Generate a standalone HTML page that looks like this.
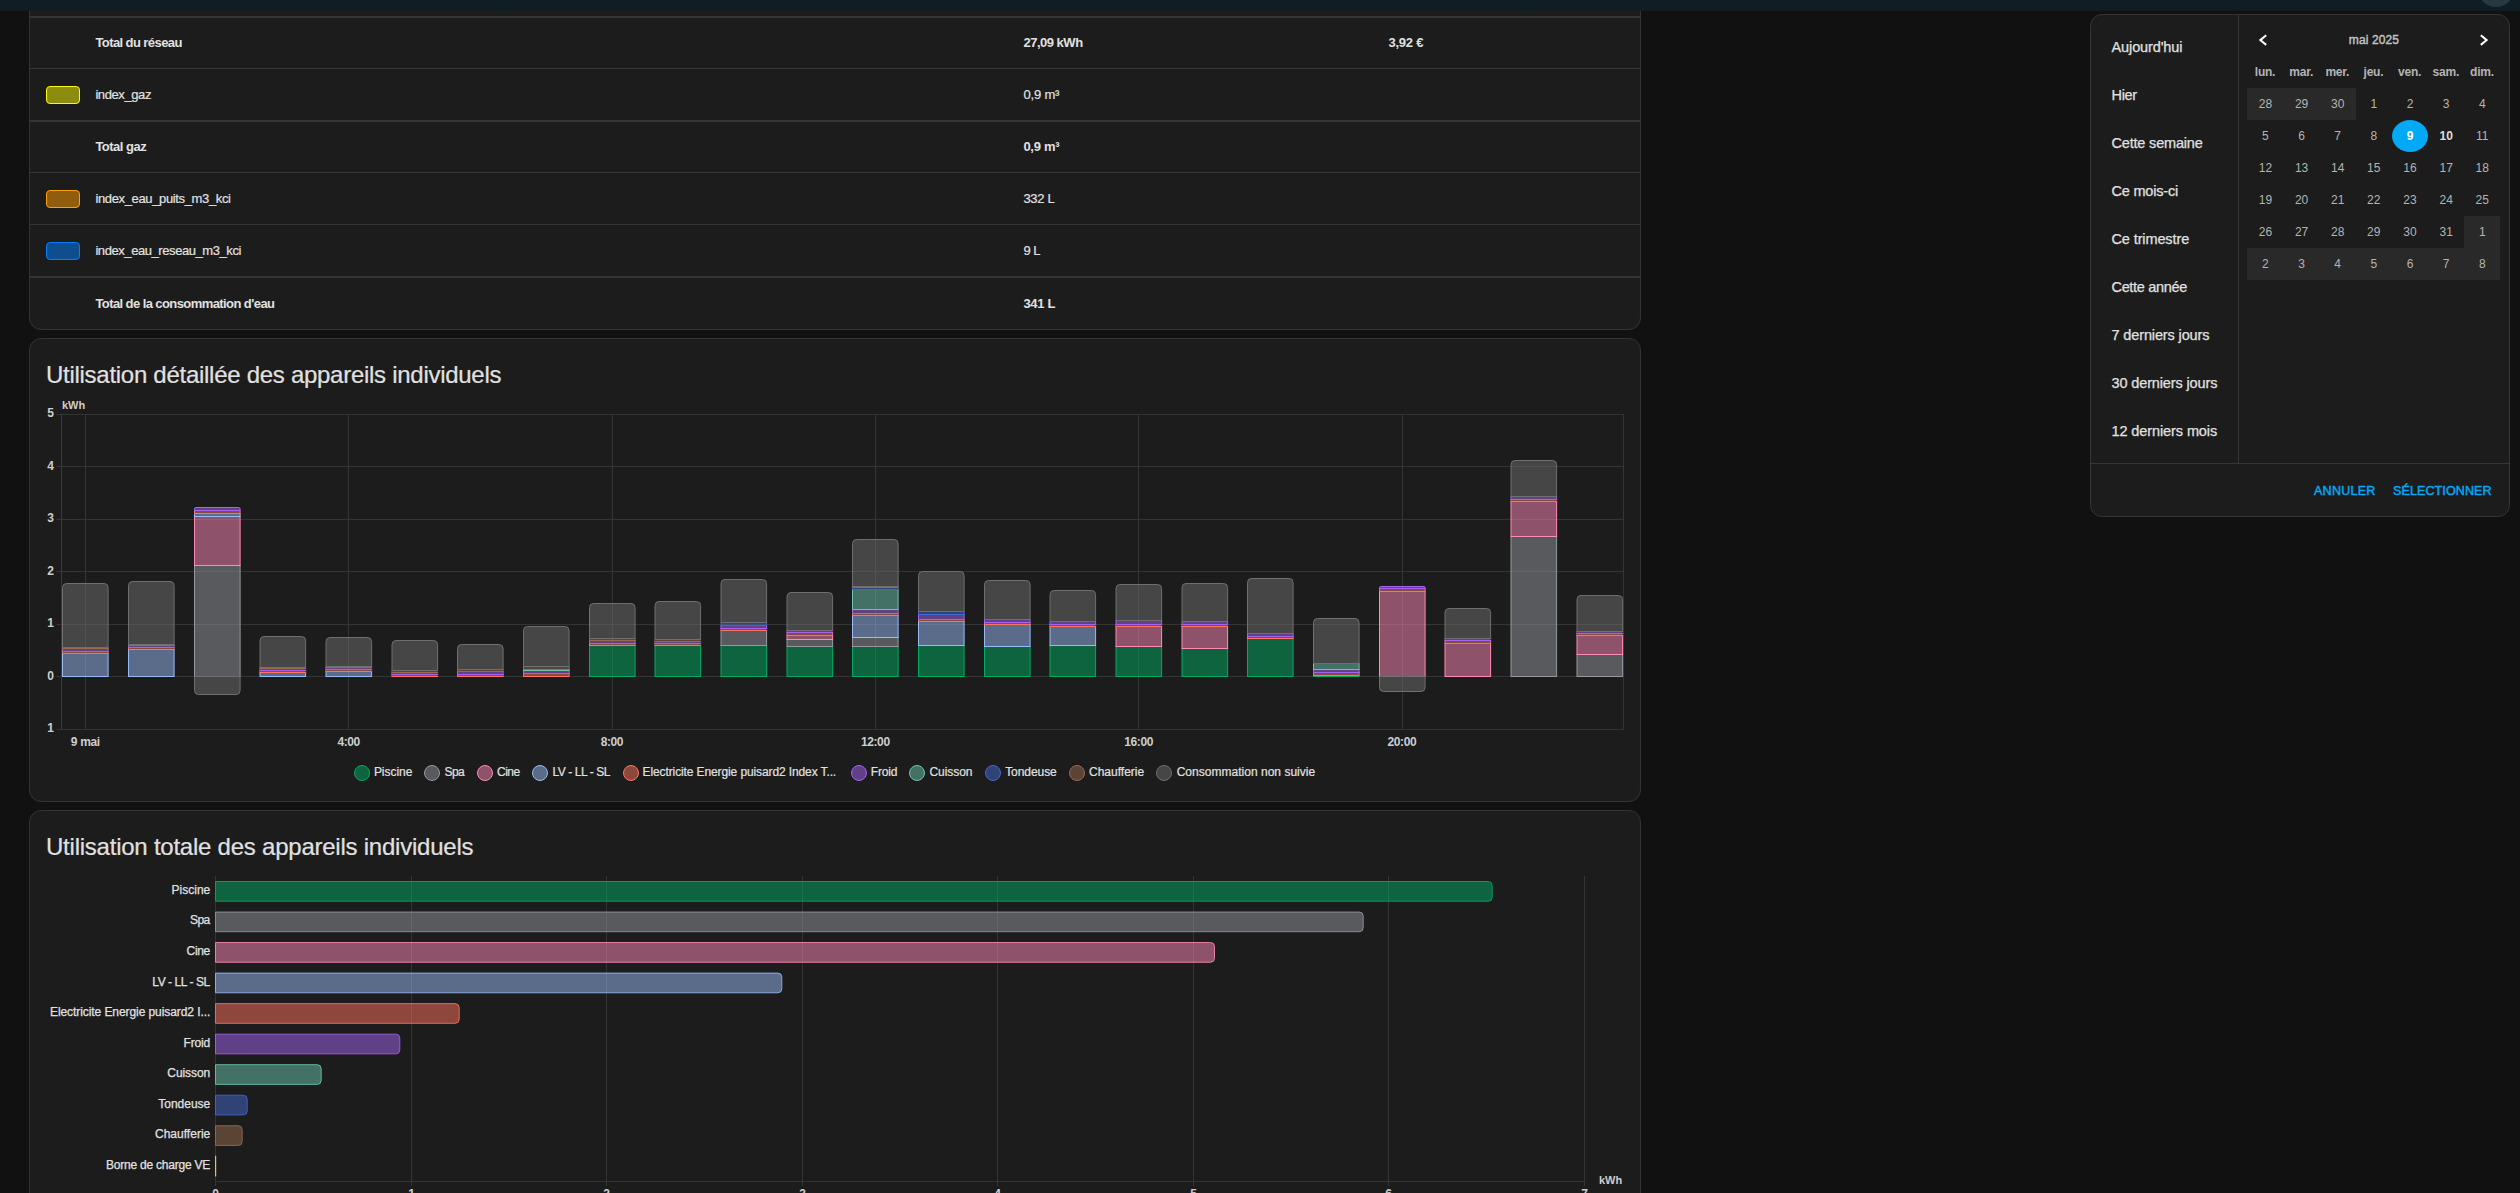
<!DOCTYPE html>
<html lang="fr"><head><meta charset="utf-8"><title>Énergie</title>
<style>
html,body{margin:0;padding:0;background:#111111;}
html{width:2520px;height:1193px;overflow:hidden;}
body{width:2520px;height:1193px;overflow:hidden;position:relative;font-family:"Liberation Sans", sans-serif;color:#e1e1e1;}
.abs{position:absolute;}
.card{position:absolute;left:29px;width:1610px;background:#1c1c1c;border:1px solid #333333;border-radius:12px;}
.t{position:absolute;white-space:pre;line-height:1;}
.title{font-size:24px;color:#e1e1e1;-webkit-text-stroke:0.2px #e1e1e1;}
.row{font-size:13px;color:#e1e1e1;-webkit-text-stroke:0.2px #e1e1e1;}
.row.b{-webkit-text-stroke:0;}
.b{font-weight:700;}
.hl{position:absolute;left:30px;width:1610px;background:#353535;}
.sw{position:absolute;left:46px;width:32px;height:16px;border-radius:4px;border:1px solid;}
.lg{position:absolute;top:765px;width:14px;height:14px;border-radius:50%;border:1px solid;}
.lt{position:absolute;top:764.7px;font-size:12px;line-height:14px;white-space:pre;color:#e1e1e1;-webkit-text-stroke:0.2px #e1e1e1;}
.rng{position:absolute;left:2111.5px;font-size:14.5px;line-height:16px;white-space:pre;color:#e1e1e1;-webkit-text-stroke:0.25px #e1e1e1;}
.cal{position:absolute;width:36px;height:32px;line-height:32px;text-align:center;font-size:12px;color:#b4b4b4;}
.wd{position:absolute;width:40px;text-align:center;font-size:12px;line-height:14px;font-weight:700;color:#b4b4b4;top:65px;letter-spacing:-0.25px;}
.out{position:absolute;background:#292929;}
.btn{font-size:12.5px;color:#03a9f4;-webkit-text-stroke:0.45px #03a9f4;}
svg text{font-family:"Liberation Sans", sans-serif;}
#root{position:absolute;left:0;top:0;width:2520px;height:1193px;overflow:hidden;background:#111111;}
</style></head><body><div id="root">

<div class="abs" style="left:0;top:0;width:2520px;height:11px;background:linear-gradient(#101e24 0,#101e24 10px,rgba(17,32,40,.72) 10px);overflow:hidden;z-index:5"><div class="abs" style="left:2478px;top:-29px;width:36px;height:36px;border-radius:50%;background:#2a3940"></div></div>
<div class="card" style="top:-30px;height:358px;"></div>
<div class="hl" style="top:16px;height:2px"></div>
<div class="hl" style="top:68px;height:1px"></div>
<div class="hl" style="top:120px;height:2px"></div>
<div class="hl" style="top:172px;height:1px"></div>
<div class="hl" style="top:224px;height:1px"></div>
<div class="hl" style="top:276px;height:2px"></div>
<div class="t row b" style="left:95.4px;top:36px;letter-spacing:-0.58px">Total du réseau</div>
<div class="t row b" style="left:1023.4px;top:36px;letter-spacing:-0.486px">27,09 kWh</div>
<div class="t row b" style="left:1388.4px;top:36px;letter-spacing:-0.229px">3,92 €</div>
<div class="sw" style="top:86px;border-color:#fcfc00;background:rgba(252,252,0,0.5)"></div>
<div class="t row" style="left:95.4px;top:88px;letter-spacing:-0.409px">index_gaz</div>
<div class="t row" style="left:1023.4px;top:88px;letter-spacing:-0.169px">0,9 m³</div>
<div class="t row b" style="left:95.4px;top:140px;letter-spacing:-0.509px">Total gaz</div>
<div class="t row b" style="left:1023.4px;top:140px;letter-spacing:-0.254px">0,9 m³</div>
<div class="sw" style="top:190px;border-color:#ffa000;background:rgba(255,160,0,0.5)"></div>
<div class="t row" style="left:95.4px;top:192px;letter-spacing:-0.357px">index_eau_puits_m3_kci</div>
<div class="t row" style="left:1023.4px;top:192px;letter-spacing:-0.308px">332 L</div>
<div class="sw" style="top:242px;border-color:#0080ff;background:rgba(0,128,255,0.5)"></div>
<div class="t row" style="left:95.4px;top:244px;letter-spacing:-0.427px">index_eau_reseau_m3_kci</div>
<div class="t row" style="left:1023.4px;top:244px;letter-spacing:-0.536px">9 L</div>
<div class="t row b" style="left:95.4px;top:297px;letter-spacing:-0.581px">Total de la consommation d'eau</div>
<div class="t row b" style="left:1023.4px;top:297px;letter-spacing:-0.311px">341 L</div>
<div class="card" style="top:338px;height:462px;"></div>
<div class="t title" style="left:46px;top:363px;letter-spacing:-0.278px">Utilisation détaillée des appareils individuels</div>
<div class="card" style="top:810px;height:420px;"></div>
<div class="t title" style="left:46px;top:835px;letter-spacing:-0.235px">Utilisation totale des appareils individuels</div>
<svg class="abs" style="left:0;top:0" width="2520" height="1193" viewBox="0 0 2520 1193">
<line x1="56.5" x2="1623.5" y1="414.5" y2="414.5" stroke="#343434" stroke-width="1"/>
<text x="54" y="417.2" font-size="12" font-weight="700" fill="#cecece" text-anchor="end">5</text>
<line x1="56.5" x2="1623.5" y1="466.5" y2="466.5" stroke="#343434" stroke-width="1"/>
<text x="54" y="469.7" font-size="12" font-weight="700" fill="#cecece" text-anchor="end">4</text>
<line x1="56.5" x2="1623.5" y1="519.5" y2="519.5" stroke="#343434" stroke-width="1"/>
<text x="54" y="522.2" font-size="12" font-weight="700" fill="#cecece" text-anchor="end">3</text>
<line x1="56.5" x2="1623.5" y1="571.5" y2="571.5" stroke="#343434" stroke-width="1"/>
<text x="54" y="574.7" font-size="12" font-weight="700" fill="#cecece" text-anchor="end">2</text>
<line x1="56.5" x2="1623.5" y1="624.5" y2="624.5" stroke="#343434" stroke-width="1"/>
<text x="54" y="627.2" font-size="12" font-weight="700" fill="#cecece" text-anchor="end">1</text>
<line x1="56.5" x2="1623.5" y1="676.5" y2="676.5" stroke="#343434" stroke-width="1"/>
<text x="54" y="679.7" font-size="12" font-weight="700" fill="#cecece" text-anchor="end">0</text>
<line x1="56.5" x2="1623.5" y1="729.5" y2="729.5" stroke="#343434" stroke-width="1"/>
<text x="54" y="732.2" font-size="12" font-weight="700" fill="#cecece" text-anchor="end">1</text>
<line x1="85.5" x2="85.5" y1="414.0" y2="729.5" stroke="#343434" stroke-width="1"/>
<line x1="348.5" x2="348.5" y1="414.0" y2="729.5" stroke="#343434" stroke-width="1"/>
<line x1="612.5" x2="612.5" y1="414.0" y2="729.5" stroke="#343434" stroke-width="1"/>
<line x1="875.5" x2="875.5" y1="414.0" y2="729.5" stroke="#343434" stroke-width="1"/>
<line x1="1138.5" x2="1138.5" y1="414.0" y2="729.5" stroke="#343434" stroke-width="1"/>
<line x1="1402.5" x2="1402.5" y1="414.0" y2="729.5" stroke="#343434" stroke-width="1"/>
<line x1="61.5" x2="61.5" y1="414.0" y2="729.5" stroke="#3a3a3a" stroke-width="1"/>
<line x1="1623.5" x2="1623.5" y1="414.0" y2="729.5" stroke="#343434" stroke-width="1"/>
<text x="62" y="409" font-size="11" font-weight="700" fill="#cecece">kWh</text>
<text x="85.3" y="746" font-size="12" font-weight="700" fill="#cecece" text-anchor="middle" letter-spacing="-0.346">9 mai</text>
<text x="348.6" y="746" font-size="12" font-weight="700" fill="#cecece" text-anchor="middle" letter-spacing="-0.44">4:00</text>
<text x="611.9" y="746" font-size="12" font-weight="700" fill="#cecece" text-anchor="middle" letter-spacing="-0.44">8:00</text>
<text x="875.3" y="746" font-size="12" font-weight="700" fill="#cecece" text-anchor="middle" letter-spacing="-0.373">12:00</text>
<text x="1138.6" y="746" font-size="12" font-weight="700" fill="#cecece" text-anchor="middle" letter-spacing="-0.373">16:00</text>
<text x="1401.9" y="746" font-size="12" font-weight="700" fill="#cecece" text-anchor="middle" letter-spacing="-0.373">20:00</text>
<rect x="62.5" y="653.5" width="45.60" height="23.0" fill="rgba(151,187,245,0.5)" stroke="#97bbf5" stroke-width="1"/>
<rect x="62.5" y="651.5" width="45.60" height="2.0" fill="rgba(255,114,92,0.5)" stroke="#ff725c" stroke-width="1"/>
<rect x="62.5" y="648.5" width="45.60" height="3.0" fill="rgba(164,99,242,0.5)" stroke="#a463f2" stroke-width="1"/>
<rect x="62.5" y="647.5" width="45.60" height="1.0" fill="rgba(156,107,78,0.5)" stroke="#9c6b4e" stroke-width="1"/>
<path d="M62.5,647.5 L62.5,587.5 Q62.5,583.5 66.5,583.5 L104.1,583.5 Q108.1,583.5 108.1,587.5 L108.1,647.5 Z" fill="rgba(111,111,111,0.5)" stroke="#6f6f6f" stroke-width="1"/>
<rect x="128.5" y="649.5" width="45.60" height="27.0" fill="rgba(151,187,245,0.5)" stroke="#97bbf5" stroke-width="1"/>
<rect x="128.5" y="647.5" width="45.60" height="2.0" fill="rgba(255,114,92,0.5)" stroke="#ff725c" stroke-width="1"/>
<rect x="128.5" y="645.5" width="45.60" height="2.0" fill="rgba(164,99,242,0.5)" stroke="#a463f2" stroke-width="1"/>
<rect x="128.5" y="644.5" width="45.60" height="1.0" fill="rgba(156,107,78,0.5)" stroke="#9c6b4e" stroke-width="1"/>
<path d="M128.5,644.5 L128.5,585.5 Q128.5,581.5 132.5,581.5 L170.1,581.5 Q174.1,581.5 174.1,585.5 L174.1,644.5 Z" fill="rgba(111,111,111,0.5)" stroke="#6f6f6f" stroke-width="1"/>
<rect x="194.5" y="565.5" width="45.60" height="111.0" fill="rgba(148,152,160,0.5)" stroke="#9498a0" stroke-width="1"/>
<rect x="194.5" y="516.5" width="45.60" height="49.0" fill="rgba(255,138,183,0.5)" stroke="#ff8ab7" stroke-width="1"/>
<rect x="194.5" y="513.5" width="45.60" height="3.0" fill="rgba(151,187,245,0.5)" stroke="#97bbf5" stroke-width="1"/>
<rect x="194.5" y="510.5" width="45.60" height="3.0" fill="rgba(255,114,92,0.5)" stroke="#ff725c" stroke-width="1"/>
<path d="M194.5,510.5 L194.5,509.0 Q194.5,507.5 196.0,507.5 L238.6,507.5 Q240.1,507.5 240.1,509.0 L240.1,510.5 Z" fill="rgba(164,99,242,0.5)" stroke="#a463f2" stroke-width="1"/>
<path d="M194.5,676.5 L240.1,676.5 L240.1,690.5 Q240.1,694.5 236.1,694.5 L198.5,694.5 Q194.5,694.5 194.5,690.5 Z" fill="rgba(111,111,111,0.5)" stroke="#6f6f6f" stroke-width="1"/>
<rect x="260.0" y="672.5" width="45.60" height="4.0" fill="rgba(151,187,245,0.5)" stroke="#97bbf5" stroke-width="1"/>
<rect x="260.0" y="670.5" width="45.60" height="2.0" fill="rgba(255,114,92,0.5)" stroke="#ff725c" stroke-width="1"/>
<rect x="260.0" y="668.5" width="45.60" height="2.0" fill="rgba(164,99,242,0.5)" stroke="#a463f2" stroke-width="1"/>
<rect x="260.0" y="667.5" width="45.60" height="1.0" fill="rgba(156,107,78,0.5)" stroke="#9c6b4e" stroke-width="1"/>
<path d="M260.0,667.5 L260.0,640.5 Q260.0,636.5 264.0,636.5 L301.6,636.5 Q305.6,636.5 305.6,640.5 L305.6,667.5 Z" fill="rgba(111,111,111,0.5)" stroke="#6f6f6f" stroke-width="1"/>
<rect x="326.0" y="671.5" width="45.60" height="5.0" fill="rgba(151,187,245,0.5)" stroke="#97bbf5" stroke-width="1"/>
<rect x="326.0" y="669.5" width="45.60" height="2.0" fill="rgba(255,114,92,0.5)" stroke="#ff725c" stroke-width="1"/>
<rect x="326.0" y="667.5" width="45.60" height="2.0" fill="rgba(164,99,242,0.5)" stroke="#a463f2" stroke-width="1"/>
<rect x="326.0" y="666.5" width="45.60" height="1.0" fill="rgba(156,107,78,0.5)" stroke="#9c6b4e" stroke-width="1"/>
<path d="M326.0,666.5 L326.0,641.5 Q326.0,637.5 330.0,637.5 L367.6,637.5 Q371.6,637.5 371.6,641.5 L371.6,666.5 Z" fill="rgba(111,111,111,0.5)" stroke="#6f6f6f" stroke-width="1"/>
<rect x="392.0" y="674.5" width="45.60" height="2.0" fill="rgba(255,114,92,0.5)" stroke="#ff725c" stroke-width="1"/>
<rect x="392.0" y="672.5" width="45.60" height="2.0" fill="rgba(164,99,242,0.5)" stroke="#a463f2" stroke-width="1"/>
<rect x="392.0" y="670.5" width="45.60" height="2.0" fill="rgba(156,107,78,0.5)" stroke="#9c6b4e" stroke-width="1"/>
<path d="M392.0,670.5 L392.0,644.5 Q392.0,640.5 396.0,640.5 L433.6,640.5 Q437.6,640.5 437.6,644.5 L437.6,670.5 Z" fill="rgba(111,111,111,0.5)" stroke="#6f6f6f" stroke-width="1"/>
<rect x="457.5" y="674.5" width="45.60" height="2.0" fill="rgba(255,114,92,0.5)" stroke="#ff725c" stroke-width="1"/>
<rect x="457.5" y="671.5" width="45.60" height="3.0" fill="rgba(164,99,242,0.5)" stroke="#a463f2" stroke-width="1"/>
<rect x="457.5" y="669.5" width="45.60" height="2.0" fill="rgba(156,107,78,0.5)" stroke="#9c6b4e" stroke-width="1"/>
<path d="M457.5,669.5 L457.5,648.5 Q457.5,644.5 461.5,644.5 L499.1,644.5 Q503.1,644.5 503.1,648.5 L503.1,669.5 Z" fill="rgba(111,111,111,0.5)" stroke="#6f6f6f" stroke-width="1"/>
<rect x="523.5" y="673.5" width="45.60" height="3.0" fill="rgba(255,114,92,0.5)" stroke="#ff725c" stroke-width="1"/>
<rect x="523.5" y="670.5" width="45.60" height="3.0" fill="rgba(164,99,242,0.5)" stroke="#a463f2" stroke-width="1"/>
<rect x="523.5" y="669.5" width="45.60" height="1.0" fill="rgba(108,197,176,0.5)" stroke="#6cc5b0" stroke-width="1"/>
<rect x="523.5" y="666.5" width="45.60" height="3.0" fill="rgba(156,107,78,0.5)" stroke="#9c6b4e" stroke-width="1"/>
<path d="M523.5,666.5 L523.5,630.5 Q523.5,626.5 527.5,626.5 L565.1,626.5 Q569.1,626.5 569.1,630.5 L569.1,666.5 Z" fill="rgba(111,111,111,0.5)" stroke="#6f6f6f" stroke-width="1"/>
<rect x="589.5" y="645.5" width="45.60" height="31.0" fill="rgba(1,171,99,0.5)" stroke="#01ab63" stroke-width="1"/>
<rect x="589.5" y="643.5" width="45.60" height="2.0" fill="rgba(255,114,92,0.5)" stroke="#ff725c" stroke-width="1"/>
<rect x="589.5" y="640.5" width="45.60" height="3.0" fill="rgba(164,99,242,0.5)" stroke="#a463f2" stroke-width="1"/>
<rect x="589.5" y="638.5" width="45.60" height="2.0" fill="rgba(156,107,78,0.5)" stroke="#9c6b4e" stroke-width="1"/>
<path d="M589.5,638.5 L589.5,607.5 Q589.5,603.5 593.5,603.5 L631.1,603.5 Q635.1,603.5 635.1,607.5 L635.1,638.5 Z" fill="rgba(111,111,111,0.5)" stroke="#6f6f6f" stroke-width="1"/>
<rect x="655.0" y="645.5" width="45.60" height="31.0" fill="rgba(1,171,99,0.5)" stroke="#01ab63" stroke-width="1"/>
<rect x="655.0" y="643.5" width="45.60" height="2.0" fill="rgba(255,114,92,0.5)" stroke="#ff725c" stroke-width="1"/>
<rect x="655.0" y="641.5" width="45.60" height="2.0" fill="rgba(164,99,242,0.5)" stroke="#a463f2" stroke-width="1"/>
<rect x="655.0" y="639.5" width="45.60" height="2.0" fill="rgba(156,107,78,0.5)" stroke="#9c6b4e" stroke-width="1"/>
<path d="M655.0,639.5 L655.0,605.5 Q655.0,601.5 659.0,601.5 L696.6,601.5 Q700.6,601.5 700.6,605.5 L700.6,639.5 Z" fill="rgba(111,111,111,0.5)" stroke="#6f6f6f" stroke-width="1"/>
<rect x="721.0" y="645.5" width="45.60" height="31.0" fill="rgba(1,171,99,0.5)" stroke="#01ab63" stroke-width="1"/>
<rect x="721.0" y="630.5" width="45.60" height="15.0" fill="rgba(148,152,160,0.5)" stroke="#9498a0" stroke-width="1"/>
<rect x="721.0" y="628.5" width="45.60" height="2.0" fill="rgba(255,114,92,0.5)" stroke="#ff725c" stroke-width="1"/>
<rect x="721.0" y="625.5" width="45.60" height="3.0" fill="rgba(164,99,242,0.5)" stroke="#a463f2" stroke-width="1"/>
<rect x="721.0" y="622.5" width="45.60" height="3.0" fill="rgba(66,105,208,0.5)" stroke="#4269d0" stroke-width="1"/>
<path d="M721.0,622.5 L721.0,583.5 Q721.0,579.5 725.0,579.5 L762.6,579.5 Q766.6,579.5 766.6,583.5 L766.6,622.5 Z" fill="rgba(111,111,111,0.5)" stroke="#6f6f6f" stroke-width="1"/>
<rect x="787.0" y="646.5" width="45.60" height="30.0" fill="rgba(1,171,99,0.5)" stroke="#01ab63" stroke-width="1"/>
<rect x="787.0" y="639.5" width="45.60" height="7.0" fill="rgba(148,152,160,0.5)" stroke="#9498a0" stroke-width="1"/>
<rect x="787.0" y="635.5" width="45.60" height="4.0" fill="rgba(255,138,183,0.5)" stroke="#ff8ab7" stroke-width="1"/>
<rect x="787.0" y="632.5" width="45.60" height="3.0" fill="rgba(255,114,92,0.5)" stroke="#ff725c" stroke-width="1"/>
<rect x="787.0" y="630.5" width="45.60" height="2.0" fill="rgba(164,99,242,0.5)" stroke="#a463f2" stroke-width="1"/>
<path d="M787.0,630.5 L787.0,596.5 Q787.0,592.5 791.0,592.5 L828.6,592.5 Q832.6,592.5 832.6,596.5 L832.6,630.5 Z" fill="rgba(111,111,111,0.5)" stroke="#6f6f6f" stroke-width="1"/>
<rect x="852.5" y="646.5" width="45.60" height="30.0" fill="rgba(1,171,99,0.5)" stroke="#01ab63" stroke-width="1"/>
<rect x="852.5" y="637.5" width="45.60" height="9.0" fill="rgba(148,152,160,0.5)" stroke="#9498a0" stroke-width="1"/>
<rect x="852.5" y="615.5" width="45.60" height="22.0" fill="rgba(151,187,245,0.5)" stroke="#97bbf5" stroke-width="1"/>
<rect x="852.5" y="613.5" width="45.60" height="2.0" fill="rgba(255,114,92,0.5)" stroke="#ff725c" stroke-width="1"/>
<rect x="852.5" y="609.5" width="45.60" height="4.0" fill="rgba(164,99,242,0.5)" stroke="#a463f2" stroke-width="1"/>
<rect x="852.5" y="589.5" width="45.60" height="20.0" fill="rgba(108,197,176,0.5)" stroke="#6cc5b0" stroke-width="1"/>
<rect x="852.5" y="587.5" width="45.60" height="2.0" fill="rgba(66,105,208,0.5)" stroke="#4269d0" stroke-width="1"/>
<rect x="852.5" y="586.5" width="45.60" height="1.0" fill="rgba(156,107,78,0.5)" stroke="#9c6b4e" stroke-width="1"/>
<path d="M852.5,586.5 L852.5,543.5 Q852.5,539.5 856.5,539.5 L894.1,539.5 Q898.1,539.5 898.1,543.5 L898.1,586.5 Z" fill="rgba(111,111,111,0.5)" stroke="#6f6f6f" stroke-width="1"/>
<rect x="918.5" y="645.5" width="45.60" height="31.0" fill="rgba(1,171,99,0.5)" stroke="#01ab63" stroke-width="1"/>
<rect x="918.5" y="621.5" width="45.60" height="24.0" fill="rgba(151,187,245,0.5)" stroke="#97bbf5" stroke-width="1"/>
<rect x="918.5" y="619.5" width="45.60" height="2.0" fill="rgba(255,114,92,0.5)" stroke="#ff725c" stroke-width="1"/>
<rect x="918.5" y="614.5" width="45.60" height="5.0" fill="rgba(164,99,242,0.5)" stroke="#a463f2" stroke-width="1"/>
<rect x="918.5" y="611.5" width="45.60" height="3.0" fill="rgba(66,105,208,0.5)" stroke="#4269d0" stroke-width="1"/>
<path d="M918.5,611.5 L918.5,575.5 Q918.5,571.5 922.5,571.5 L960.1,571.5 Q964.1,571.5 964.1,575.5 L964.1,611.5 Z" fill="rgba(111,111,111,0.5)" stroke="#6f6f6f" stroke-width="1"/>
<rect x="984.5" y="646.5" width="45.60" height="30.0" fill="rgba(1,171,99,0.5)" stroke="#01ab63" stroke-width="1"/>
<rect x="984.5" y="624.5" width="45.60" height="22.0" fill="rgba(151,187,245,0.5)" stroke="#97bbf5" stroke-width="1"/>
<rect x="984.5" y="622.5" width="45.60" height="2.0" fill="rgba(255,114,92,0.5)" stroke="#ff725c" stroke-width="1"/>
<rect x="984.5" y="619.5" width="45.60" height="3.0" fill="rgba(164,99,242,0.5)" stroke="#a463f2" stroke-width="1"/>
<path d="M984.5,619.5 L984.5,584.5 Q984.5,580.5 988.5,580.5 L1026.1,580.5 Q1030.1,580.5 1030.1,584.5 L1030.1,619.5 Z" fill="rgba(111,111,111,0.5)" stroke="#6f6f6f" stroke-width="1"/>
<rect x="1050.0" y="645.5" width="45.60" height="31.0" fill="rgba(1,171,99,0.5)" stroke="#01ab63" stroke-width="1"/>
<rect x="1050.0" y="626.5" width="45.60" height="19.0" fill="rgba(151,187,245,0.5)" stroke="#97bbf5" stroke-width="1"/>
<rect x="1050.0" y="624.5" width="45.60" height="2.0" fill="rgba(255,114,92,0.5)" stroke="#ff725c" stroke-width="1"/>
<rect x="1050.0" y="621.5" width="45.60" height="3.0" fill="rgba(164,99,242,0.5)" stroke="#a463f2" stroke-width="1"/>
<path d="M1050.0,621.5 L1050.0,594.5 Q1050.0,590.5 1054.0,590.5 L1091.6,590.5 Q1095.6,590.5 1095.6,594.5 L1095.6,621.5 Z" fill="rgba(111,111,111,0.5)" stroke="#6f6f6f" stroke-width="1"/>
<rect x="1116.0" y="646.5" width="45.60" height="30.0" fill="rgba(1,171,99,0.5)" stroke="#01ab63" stroke-width="1"/>
<rect x="1116.0" y="626.5" width="45.60" height="20.0" fill="rgba(255,138,183,0.5)" stroke="#ff8ab7" stroke-width="1"/>
<rect x="1116.0" y="624.5" width="45.60" height="2.0" fill="rgba(255,114,92,0.5)" stroke="#ff725c" stroke-width="1"/>
<rect x="1116.0" y="620.5" width="45.60" height="4.0" fill="rgba(164,99,242,0.5)" stroke="#a463f2" stroke-width="1"/>
<path d="M1116.0,620.5 L1116.0,588.5 Q1116.0,584.5 1120.0,584.5 L1157.6,584.5 Q1161.6,584.5 1161.6,588.5 L1161.6,620.5 Z" fill="rgba(111,111,111,0.5)" stroke="#6f6f6f" stroke-width="1"/>
<rect x="1182.0" y="648.5" width="45.60" height="28.0" fill="rgba(1,171,99,0.5)" stroke="#01ab63" stroke-width="1"/>
<rect x="1182.0" y="626.5" width="45.60" height="22.0" fill="rgba(255,138,183,0.5)" stroke="#ff8ab7" stroke-width="1"/>
<rect x="1182.0" y="624.5" width="45.60" height="2.0" fill="rgba(255,114,92,0.5)" stroke="#ff725c" stroke-width="1"/>
<rect x="1182.0" y="621.5" width="45.60" height="3.0" fill="rgba(164,99,242,0.5)" stroke="#a463f2" stroke-width="1"/>
<path d="M1182.0,621.5 L1182.0,587.5 Q1182.0,583.5 1186.0,583.5 L1223.6,583.5 Q1227.6,583.5 1227.6,587.5 L1227.6,621.5 Z" fill="rgba(111,111,111,0.5)" stroke="#6f6f6f" stroke-width="1"/>
<rect x="1247.5" y="638.5" width="45.60" height="38.0" fill="rgba(1,171,99,0.5)" stroke="#01ab63" stroke-width="1"/>
<rect x="1247.5" y="636.5" width="45.60" height="2.0" fill="rgba(255,114,92,0.5)" stroke="#ff725c" stroke-width="1"/>
<rect x="1247.5" y="633.5" width="45.60" height="3.0" fill="rgba(164,99,242,0.5)" stroke="#a463f2" stroke-width="1"/>
<path d="M1247.5,633.5 L1247.5,582.5 Q1247.5,578.5 1251.5,578.5 L1289.1,578.5 Q1293.1,578.5 1293.1,582.5 L1293.1,633.5 Z" fill="rgba(111,111,111,0.5)" stroke="#6f6f6f" stroke-width="1"/>
<rect x="1313.5" y="675.5" width="45.60" height="1.0" fill="rgba(1,171,99,0.5)" stroke="#01ab63" stroke-width="1"/>
<rect x="1313.5" y="672.5" width="45.60" height="3.0" fill="rgba(255,114,92,0.5)" stroke="#ff725c" stroke-width="1"/>
<rect x="1313.5" y="669.5" width="45.60" height="3.0" fill="rgba(164,99,242,0.5)" stroke="#a463f2" stroke-width="1"/>
<rect x="1313.5" y="663.5" width="45.60" height="6.0" fill="rgba(108,197,176,0.5)" stroke="#6cc5b0" stroke-width="1"/>
<path d="M1313.5,663.5 L1313.5,622.5 Q1313.5,618.5 1317.5,618.5 L1355.1,618.5 Q1359.1,618.5 1359.1,622.5 L1359.1,663.5 Z" fill="rgba(111,111,111,0.5)" stroke="#6f6f6f" stroke-width="1"/>
<rect x="1379.5" y="591.5" width="45.60" height="85.0" fill="rgba(255,138,183,0.5)" stroke="#ff8ab7" stroke-width="1"/>
<rect x="1379.5" y="588.5" width="45.60" height="3.0" fill="rgba(255,114,92,0.5)" stroke="#ff725c" stroke-width="1"/>
<path d="M1379.5,588.5 L1379.5,587.5 Q1379.5,586.5 1380.5,586.5 L1424.1,586.5 Q1425.1,586.5 1425.1,587.5 L1425.1,588.5 Z" fill="rgba(164,99,242,0.5)" stroke="#a463f2" stroke-width="1"/>
<path d="M1379.5,676.5 L1425.1,676.5 L1425.1,687.5 Q1425.1,691.5 1421.1,691.5 L1383.5,691.5 Q1379.5,691.5 1379.5,687.5 Z" fill="rgba(111,111,111,0.5)" stroke="#6f6f6f" stroke-width="1"/>
<rect x="1445.0" y="643.5" width="45.60" height="33.0" fill="rgba(255,138,183,0.5)" stroke="#ff8ab7" stroke-width="1"/>
<rect x="1445.0" y="640.5" width="45.60" height="3.0" fill="rgba(255,114,92,0.5)" stroke="#ff725c" stroke-width="1"/>
<rect x="1445.0" y="638.5" width="45.60" height="2.0" fill="rgba(164,99,242,0.5)" stroke="#a463f2" stroke-width="1"/>
<path d="M1445.0,638.5 L1445.0,612.5 Q1445.0,608.5 1449.0,608.5 L1486.6,608.5 Q1490.6,608.5 1490.6,612.5 L1490.6,638.5 Z" fill="rgba(111,111,111,0.5)" stroke="#6f6f6f" stroke-width="1"/>
<rect x="1511.0" y="536.5" width="45.60" height="140.0" fill="rgba(148,152,160,0.5)" stroke="#9498a0" stroke-width="1"/>
<rect x="1511.0" y="501.5" width="45.60" height="35.0" fill="rgba(255,138,183,0.5)" stroke="#ff8ab7" stroke-width="1"/>
<rect x="1511.0" y="499.5" width="45.60" height="2.0" fill="rgba(255,114,92,0.5)" stroke="#ff725c" stroke-width="1"/>
<rect x="1511.0" y="496.5" width="45.60" height="3.0" fill="rgba(164,99,242,0.5)" stroke="#a463f2" stroke-width="1"/>
<path d="M1511.0,496.5 L1511.0,464.5 Q1511.0,460.5 1515.0,460.5 L1552.6,460.5 Q1556.6,460.5 1556.6,464.5 L1556.6,496.5 Z" fill="rgba(111,111,111,0.5)" stroke="#6f6f6f" stroke-width="1"/>
<rect x="1577.0" y="654.5" width="45.60" height="22.0" fill="rgba(148,152,160,0.5)" stroke="#9498a0" stroke-width="1"/>
<rect x="1577.0" y="635.5" width="45.60" height="19.0" fill="rgba(255,138,183,0.5)" stroke="#ff8ab7" stroke-width="1"/>
<rect x="1577.0" y="633.5" width="45.60" height="2.0" fill="rgba(255,114,92,0.5)" stroke="#ff725c" stroke-width="1"/>
<rect x="1577.0" y="631.5" width="45.60" height="2.0" fill="rgba(164,99,242,0.5)" stroke="#a463f2" stroke-width="1"/>
<path d="M1577.0,631.5 L1577.0,599.5 Q1577.0,595.5 1581.0,595.5 L1618.6,595.5 Q1622.6,595.5 1622.6,599.5 L1622.6,631.5 Z" fill="rgba(111,111,111,0.5)" stroke="#6f6f6f" stroke-width="1"/>
<line x1="215.5" x2="215.5" y1="876" y2="1186.0" stroke="#343434" stroke-width="1"/>
<text x="215.5" y="1198.3" font-size="12" font-weight="700" fill="#cecece" text-anchor="middle">0</text>
<line x1="411.5" x2="411.5" y1="876" y2="1186.0" stroke="#343434" stroke-width="1"/>
<text x="411.5" y="1198.3" font-size="12" font-weight="700" fill="#cecece" text-anchor="middle">1</text>
<line x1="606.5" x2="606.5" y1="876" y2="1186.0" stroke="#343434" stroke-width="1"/>
<text x="606.5" y="1198.3" font-size="12" font-weight="700" fill="#cecece" text-anchor="middle">2</text>
<line x1="802.5" x2="802.5" y1="876" y2="1186.0" stroke="#343434" stroke-width="1"/>
<text x="802.5" y="1198.3" font-size="12" font-weight="700" fill="#cecece" text-anchor="middle">3</text>
<line x1="997.5" x2="997.5" y1="876" y2="1186.0" stroke="#343434" stroke-width="1"/>
<text x="997.5" y="1198.3" font-size="12" font-weight="700" fill="#cecece" text-anchor="middle">4</text>
<line x1="1193.5" x2="1193.5" y1="876" y2="1186.0" stroke="#343434" stroke-width="1"/>
<text x="1193.5" y="1198.3" font-size="12" font-weight="700" fill="#cecece" text-anchor="middle">5</text>
<line x1="1388.5" x2="1388.5" y1="876" y2="1186.0" stroke="#343434" stroke-width="1"/>
<text x="1388.5" y="1198.3" font-size="12" font-weight="700" fill="#cecece" text-anchor="middle">6</text>
<line x1="1584.5" x2="1584.5" y1="876" y2="1186.0" stroke="#343434" stroke-width="1"/>
<text x="1584.5" y="1198.3" font-size="12" font-weight="700" fill="#cecece" text-anchor="middle">7</text>
<line x1="215.0" x2="1584.99" y1="1181.5" y2="1181.5" stroke="#343434" stroke-width="1"/>
<text x="1598.9" y="1184" font-size="11" font-weight="700" fill="#cecece">kWh</text>
<path d="M215.5,881.50 L1488.20,881.50 Q1492.20,881.50 1492.20,885.50 L1492.20,897.20 Q1492.20,901.20 1488.20,901.20 L215.5,901.20 Z" fill="rgba(1,171,99,0.5)" stroke="#01ab63" stroke-opacity="0.85" stroke-width="1"/>
<text x="210.30" y="893.9" font-size="12" fill="#e1e1e1" stroke="#e1e1e1" stroke-width="0.25" text-anchor="end" letter-spacing="0.003">Piscine</text>
<path d="M215.5,912.03 L1359.20,912.03 Q1363.20,912.03 1363.20,916.03 L1363.20,927.73 Q1363.20,931.73 1359.20,931.73 L215.5,931.73 Z" fill="rgba(148,152,160,0.5)" stroke="#9498a0" stroke-opacity="0.85" stroke-width="1"/>
<text x="209.77" y="924.4" font-size="12" fill="#e1e1e1" stroke="#e1e1e1" stroke-width="0.25" text-anchor="end" letter-spacing="-0.526">Spa</text>
<path d="M215.5,942.56 L1210.50,942.56 Q1214.50,942.56 1214.50,946.56 L1214.50,958.26 Q1214.50,962.26 1210.50,962.26 L215.5,962.26 Z" fill="rgba(255,138,183,0.5)" stroke="#ff8ab7" stroke-opacity="0.85" stroke-width="1"/>
<text x="209.97" y="955.0" font-size="12" fill="#e1e1e1" stroke="#e1e1e1" stroke-width="0.25" text-anchor="end" letter-spacing="-0.327">Cine</text>
<path d="M215.5,973.09 L777.80,973.09 Q781.80,973.09 781.80,977.09 L781.80,988.79 Q781.80,992.79 777.80,992.79 L215.5,992.79 Z" fill="rgba(151,187,245,0.5)" stroke="#97bbf5" stroke-opacity="0.85" stroke-width="1"/>
<text x="209.87" y="985.5" font-size="12" fill="#e1e1e1" stroke="#e1e1e1" stroke-width="0.25" text-anchor="end" letter-spacing="-0.427">LV - LL - SL</text>
<path d="M215.5,1003.62 L455.20,1003.62 Q459.20,1003.62 459.20,1007.62 L459.20,1019.32 Q459.20,1023.32 455.20,1023.32 L215.5,1023.32 Z" fill="rgba(255,114,92,0.5)" stroke="#ff725c" stroke-opacity="0.85" stroke-width="1"/>
<text x="210.22" y="1016.0" font-size="12" fill="#e1e1e1" stroke="#e1e1e1" stroke-width="0.25" text-anchor="end" letter-spacing="-0.077">Electricite Energie puisard2 I...</text>
<path d="M215.5,1034.15 L395.80,1034.15 Q399.80,1034.15 399.80,1038.15 L399.80,1049.85 Q399.80,1053.85 395.80,1053.85 L215.5,1053.85 Z" fill="rgba(164,99,242,0.5)" stroke="#a463f2" stroke-opacity="0.85" stroke-width="1"/>
<text x="210.14" y="1046.5" font-size="12" fill="#e1e1e1" stroke="#e1e1e1" stroke-width="0.25" text-anchor="end" letter-spacing="-0.16">Froid</text>
<path d="M215.5,1064.68 L317.20,1064.68 Q321.20,1064.68 321.20,1068.68 L321.20,1080.38 Q321.20,1084.38 317.20,1084.38 L215.5,1084.38 Z" fill="rgba(108,197,176,0.5)" stroke="#6cc5b0" stroke-opacity="0.85" stroke-width="1"/>
<text x="210.24" y="1077.1" font-size="12" fill="#e1e1e1" stroke="#e1e1e1" stroke-width="0.25" text-anchor="end" letter-spacing="-0.059">Cuisson</text>
<path d="M215.5,1095.21 L243.20,1095.21 Q247.20,1095.21 247.20,1099.21 L247.20,1110.91 Q247.20,1114.91 243.20,1114.91 L215.5,1114.91 Z" fill="rgba(66,105,208,0.5)" stroke="#4269d0" stroke-opacity="0.85" stroke-width="1"/>
<text x="210.29" y="1107.6" font-size="12" fill="#e1e1e1" stroke="#e1e1e1" stroke-width="0.25" text-anchor="end" letter-spacing="-0.006">Tondeuse</text>
<path d="M215.5,1125.74 L238.20,1125.74 Q242.20,1125.74 242.20,1129.74 L242.20,1141.44 Q242.20,1145.44 238.20,1145.44 L215.5,1145.44 Z" fill="rgba(156,107,78,0.5)" stroke="#9c6b4e" stroke-opacity="0.85" stroke-width="1"/>
<text x="210.32" y="1138.1" font-size="12" fill="#e1e1e1" stroke="#e1e1e1" stroke-width="0.25" text-anchor="end" letter-spacing="0.017">Chaufferie</text>
<rect x="215" y="1155.77" width="1.2" height="20.7" fill="#f4bd4a"/>
<text x="210.08" y="1168.7" font-size="12" fill="#e1e1e1" stroke="#e1e1e1" stroke-width="0.25" text-anchor="end" letter-spacing="-0.222">Borne de charge VE</text>
</svg>
<div class="lg" style="left:353.8px;border-color:#01ab63;background:rgba(1,171,99,0.5)"></div>
<div class="lt" style="left:373.9px;letter-spacing:-0.031px">Piscine</div>
<div class="lg" style="left:423.7px;border-color:#9498a0;background:rgba(148,152,160,0.5)"></div>
<div class="lt" style="left:444.6px;letter-spacing:-0.576px">Spa</div>
<div class="lg" style="left:476.8px;border-color:#ff8ab7;background:rgba(255,138,183,0.5)"></div>
<div class="lt" style="left:496.9px;letter-spacing:-0.427px">Cine</div>
<div class="lg" style="left:532.0px;border-color:#97bbf5;background:rgba(151,187,245,0.5)"></div>
<div class="lt" style="left:552.5px;letter-spacing:-0.436px">LV - LL - SL</div>
<div class="lg" style="left:622.9px;border-color:#ff725c;background:rgba(255,114,92,0.5)"></div>
<div class="lt" style="left:642.6px;letter-spacing:-0.113px">Electricite Energie puisard2 Index T...</div>
<div class="lg" style="left:850.7px;border-color:#a463f2;background:rgba(164,99,242,0.5)"></div>
<div class="lt" style="left:870.8px;letter-spacing:-0.185px">Froid</div>
<div class="lg" style="left:909.0px;border-color:#6cc5b0;background:rgba(108,197,176,0.5)"></div>
<div class="lt" style="left:929.5px;letter-spacing:-0.076px">Cuisson</div>
<div class="lg" style="left:984.8px;border-color:#4269d0;background:rgba(66,105,208,0.5)"></div>
<div class="lt" style="left:1005.2px;letter-spacing:-0.063px">Tondeuse</div>
<div class="lg" style="left:1068.9px;border-color:#9c6b4e;background:rgba(156,107,78,0.5)"></div>
<div class="lt" style="left:1089.0px;letter-spacing:0.006px">Chaufferie</div>
<div class="lg" style="left:1156.2px;border-color:#6f6f6f;background:rgba(111,111,111,0.5)"></div>
<div class="lt" style="left:1176.7px;letter-spacing:0.019px">Consommation non suivie</div>
<div class="abs" style="left:2090px;top:14px;width:418px;height:501px;background:#1c1c1c;border:1px solid #353535;border-radius:12px"></div>
<div class="abs" style="left:2238px;top:15px;width:1px;height:448px;background:#353535"></div>
<div class="abs" style="left:2091px;top:463px;width:418px;height:1px;background:#353535"></div>
<div class="rng" style="top:39px;letter-spacing:-0.11px">Aujourd'hui</div>
<div class="rng" style="top:87px;letter-spacing:-0.296px">Hier</div>
<div class="rng" style="top:135px;letter-spacing:-0.183px">Cette semaine</div>
<div class="rng" style="top:183px;letter-spacing:-0.198px">Ce mois-ci</div>
<div class="rng" style="top:231px;letter-spacing:-0.114px">Ce trimestre</div>
<div class="rng" style="top:279px;letter-spacing:-0.331px">Cette année</div>
<div class="rng" style="top:327px;letter-spacing:-0.129px">7 derniers jours</div>
<div class="rng" style="top:375px;letter-spacing:-0.131px">30 derniers jours</div>
<div class="rng" style="top:423px;letter-spacing:-0.099px">12 derniers mois</div>
<div class="t" style="left:2314px;width:120px;text-align:center;top:34px;font-size:12px;letter-spacing:0.12px;color:#c4c4c4;-webkit-text-stroke:0.4px #c4c4c4">mai 2025</div>
<svg class="abs" style="left:2250px;top:28px" width="24" height="24" viewBox="0 0 24 24"><path d="M16.2,7.3 L10.3,12.1 L16.2,16.9" fill="none" stroke="#ffffff" stroke-width="2"/></svg>
<svg class="abs" style="left:2471.8px;top:28px" width="24" height="24" viewBox="0 0 24 24"><path d="M8.8,7.3 L14.7,12.1 L8.8,16.9" fill="none" stroke="#ffffff" stroke-width="2"/></svg>
<div class="wd" style="left:2245.0px">lun.</div>
<div class="wd" style="left:2281.2px">mar.</div>
<div class="wd" style="left:2317.3px">mer.</div>
<div class="wd" style="left:2353.4px">jeu.</div>
<div class="wd" style="left:2389.6px">ven.</div>
<div class="wd" style="left:2425.8px">sam.</div>
<div class="wd" style="left:2461.9px">dim.</div>
<div class="out" style="left:2247px;top:88px;width:109px;height:32px"></div>
<div class="out" style="left:2464px;top:216px;width:36px;height:32px"></div>
<div class="out" style="left:2247px;top:248px;width:253px;height:32px"></div>
<div class="cal" style="left:2247.4px;top:88px;">28</div>
<div class="cal" style="left:2283.6px;top:88px;">29</div>
<div class="cal" style="left:2319.7px;top:88px;">30</div>
<div class="cal" style="left:2355.8px;top:88px;">1</div>
<div class="cal" style="left:2392.0px;top:88px;">2</div>
<div class="cal" style="left:2428.2px;top:88px;">3</div>
<div class="cal" style="left:2464.3px;top:88px;">4</div>
<div class="cal" style="left:2247.4px;top:120px;">5</div>
<div class="cal" style="left:2283.6px;top:120px;">6</div>
<div class="cal" style="left:2319.7px;top:120px;">7</div>
<div class="cal" style="left:2355.8px;top:120px;">8</div>
<div class="abs" style="left:2391.6px;top:120px;width:36px;height:32px;background:#03a9f4;border-radius:50%"></div>
<div class="cal" style="left:2392.0px;top:120px;color:#fff;font-weight:700;">9</div>
<div class="cal" style="left:2428.2px;top:120px;color:#dedede;font-weight:700;">10</div>
<div class="cal" style="left:2464.3px;top:120px;">11</div>
<div class="cal" style="left:2247.4px;top:152px;">12</div>
<div class="cal" style="left:2283.6px;top:152px;">13</div>
<div class="cal" style="left:2319.7px;top:152px;">14</div>
<div class="cal" style="left:2355.8px;top:152px;">15</div>
<div class="cal" style="left:2392.0px;top:152px;">16</div>
<div class="cal" style="left:2428.2px;top:152px;">17</div>
<div class="cal" style="left:2464.3px;top:152px;">18</div>
<div class="cal" style="left:2247.4px;top:184px;">19</div>
<div class="cal" style="left:2283.6px;top:184px;">20</div>
<div class="cal" style="left:2319.7px;top:184px;">21</div>
<div class="cal" style="left:2355.8px;top:184px;">22</div>
<div class="cal" style="left:2392.0px;top:184px;">23</div>
<div class="cal" style="left:2428.2px;top:184px;">24</div>
<div class="cal" style="left:2464.3px;top:184px;">25</div>
<div class="cal" style="left:2247.4px;top:216px;">26</div>
<div class="cal" style="left:2283.6px;top:216px;">27</div>
<div class="cal" style="left:2319.7px;top:216px;">28</div>
<div class="cal" style="left:2355.8px;top:216px;">29</div>
<div class="cal" style="left:2392.0px;top:216px;">30</div>
<div class="cal" style="left:2428.2px;top:216px;">31</div>
<div class="cal" style="left:2464.3px;top:216px;">1</div>
<div class="cal" style="left:2247.4px;top:248px;">2</div>
<div class="cal" style="left:2283.6px;top:248px;">3</div>
<div class="cal" style="left:2319.7px;top:248px;">4</div>
<div class="cal" style="left:2355.8px;top:248px;">5</div>
<div class="cal" style="left:2392.0px;top:248px;">6</div>
<div class="cal" style="left:2428.2px;top:248px;">7</div>
<div class="cal" style="left:2464.3px;top:248px;">8</div>
<div class="t btn" style="left:2314px;top:485px;letter-spacing:0.26px">ANNULER</div>
<div class="t btn" style="left:2393px;top:485px;letter-spacing:0.123px">SÉLECTIONNER</div>
</div></body></html>
